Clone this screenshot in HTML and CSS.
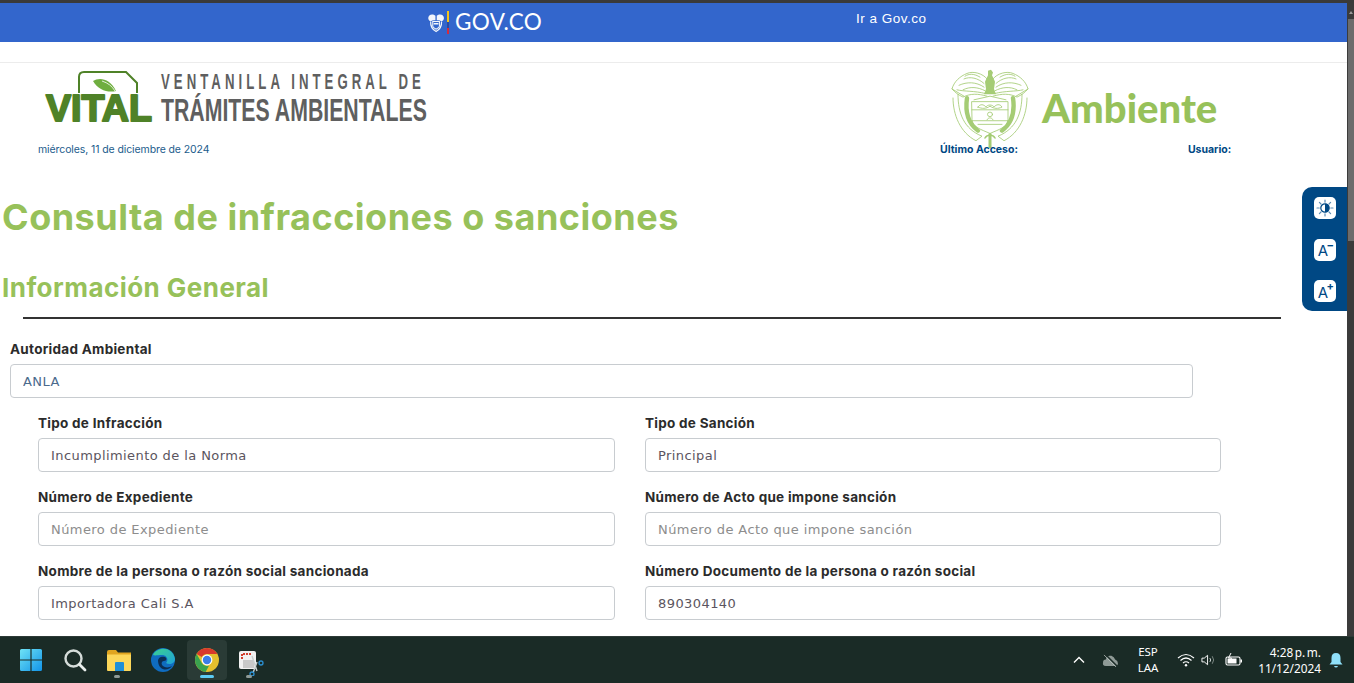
FILE: index.html
```html
<!DOCTYPE html>
<html lang="es">
<head>
<meta charset="utf-8">
<title>Consulta de infracciones o sanciones</title>
<link rel="stylesheet" href="styles.css">
</head>
<body>
<svg class="defs" width="0" height="0" aria-hidden="true">
  <symbol id="escudo" viewBox="11 5 78 88" preserveAspectRatio="none">
    <g fill="none" stroke="currentColor" stroke-width=".9" stroke-linecap="round" stroke-linejoin="round">
      <path d="M47 17C43 11 33 8 27 11C20 14 14 20 12 28C15 32 19 35 23 37C30 33 38 33 47 36"/>
      <path d="M53 17C57 11 67 8 73 11C80 14 86 20 88 28C85 32 81 35 77 37C70 33 62 33 53 36"/>
      <path d="M44 22C38 16 30 14 24 17M44 26C36 20 27 20 19 24M45 30C38 26 30 25 23 29M17 29C24 31 35 30 45 33M40 15C34 11 29 11 25 14"/>
      <path d="M56 22C62 16 70 14 76 17M56 26C64 20 73 20 81 24M55 30C62 26 70 25 77 29M83 29C76 31 65 30 55 33M60 15C66 11 71 11 75 14"/>
      <path d="M32 42H68V62C68 70 58 73 50 77C42 73 32 70 32 62Z"/>
      <path d="M32 51H68M32 63H68M34 40L50 36L66 40"/>
      <path d="M38 48C40 44 44 45 46 48C47 45 53 45 54 48C56 45 60 44 62 48C58 50 54 50 50 47C46 50 42 50 38 48Z"/>
      <circle cx="50" cy="56" r="2.5"/>
      <path d="M47 62C48 59 52 59 53 62M38 67H62"/>
      <path d="M18 34C18 55 24 72 42 80L36 85C20 76 13 56 13 38M82 34C82 55 76 72 58 80L64 85C80 76 87 56 87 38"/>
      <path d="M12 28L24 36M88 28L76 36"/>
    </g>
    <g fill="none" stroke="currentColor" stroke-linecap="round">
      <path d="M27 38C25 53 27 65 38 74" stroke-width="4.4"/>
      <path d="M73 38C75 53 73 65 62 74" stroke-width="4.4"/>
      <path d="M50 78V92" stroke-width="3"/>
      <path d="M45 82C47 78 53 78 55 82" stroke-width="1.6"/>
    </g>
    <path fill="currentColor" d="M48 8L51 7L53 10L52 13L55 20L54 28L56 34H44L46 28L45 20L48 13Z"/>
  </symbol>
  <symbol id="escudo-mini" viewBox="0 0 17 20">
    <path fill="currentColor" d="M7.800 2.500C6 .8 3 .6 1.400 2.200C.2 3.400 0 5 .6 6.200C1 7.200 2 7.900 3 8.100C4.500 7 6 6.800 7.800 7.200ZM9.200 2.500C11 .8 14 .6 15.600 2.200C16.800 3.400 17 5 16.400 6.200C16 7.200 15 7.900 14 8.100C12.500 7 11 6.800 9.200 7.200Z"/>
    <path fill="none" stroke="currentColor" stroke-width="1.100" d="M5 8.500H12V13.500C12 15 10 15.800 8.500 16.500C7 15.800 5 15 5 13.500Z"/>
    <path fill="none" stroke="currentColor" stroke-width="1.300" d="M2.800 8.500C2.500 12.500 4 16.500 8.500 19C13 16.500 14.500 12.500 14.200 8.500"/>
    <path fill="currentColor" d="M6 10H11V11.500H6Z"/>
  </symbol>
</svg>

<div class="window">
  <div class="page">
    <header class="gov-bar">
      <div class="gov-brand">
        <svg class="gov-shield"><use href="#escudo-mini"/></svg>
        <span class="gov-flag"></span>
        <span class="gov-name">GOV.CO</span>
      </div>
      <a class="gov-link">Ir a Gov.co</a>
    </header>

    <div class="gov-spacer"></div>

    <section class="brand-head">
      <div class="brand-left">
        <svg class="vital-logo" viewBox="0 0 392 62">
          <path class="vital-frame" d="M41 27V11Q41 6 46 6H88L99 17V27"/>
          <path class="vital-leaf" d="M55 15C61 11 72 12 78 25C70 27 60 24 55 15Z"/>
          <path class="vital-vein" d="M64 15C70 17 74 20 77 25"/>
          <text class="vital-word" x="8" y="55" textLength="106" lengthAdjust="spacingAndGlyphs">VITAL</text>
          <text class="logo-top" transform="translate(123 23) scale(.6 1)" textLength="438">VENTANILLA INTEGRAL DE</text>
          <text class="logo-bottom" transform="translate(123 55) scale(.65 1)" textLength="409" lengthAdjust="spacingAndGlyphs">TRÁMITES AMBIENTALES</text>
        </svg>
        <p class="today">miércoles, 11 de diciembre de 2024</p>
      </div>
      <div class="brand-right">
        <div class="ambiente">
          <svg class="ambiente-shield"><use href="#escudo"/></svg>
          <span class="ambiente-word">Ambiente</span>
        </div>
        <div class="access">
          <span>Último Acceso:</span>
          <span>Usuario:</span>
        </div>
      </div>
    </section>

    <main class="content">
      <h1>Consulta de infracciones o sanciones</h1>
      <h2>Información General</h2>
      <hr class="rule">

      <form class="form">
        <div class="field field-wide">
          <label for="autoridad">Autoridad Ambiental</label>
          <input id="autoridad" class="blue-value" value="ANLA" readonly>
        </div>
        <div class="form-grid">
          <div class="field">
            <label for="tipo">Tipo de Infracción</label>
            <input id="tipo" value="Incumplimiento de la Norma" readonly>
          </div>
          <div class="field">
            <label for="sancion">Tipo de Sanción</label>
            <input id="sancion" value="Principal" readonly>
          </div>
          <div class="field">
            <label for="exp">Número de Expediente</label>
            <input id="exp" placeholder="Número de Expediente">
          </div>
          <div class="field">
            <label for="acto">Número de Acto que impone sanción</label>
            <input id="acto" placeholder="Número de Acto que impone sanción">
          </div>
          <div class="field">
            <label for="nombre">Nombre de la persona o razón social sancionada</label>
            <input id="nombre" value="Importadora Cali S.A" readonly>
          </div>
          <div class="field">
            <label for="doc">Número Documento de la persona o razón social</label>
            <input id="doc" value="890304140" readonly>
          </div>
        </div>
      </form>
    </main>

    <aside class="a11y">
      <button class="a11y-btn" type="button" aria-label="Contraste">
        <svg viewBox="0 0 22 22" class="a11y-icon">
          <circle cx="11" cy="11" r="4.2" fill="none" stroke="#004884" stroke-width="1.2"/>
          <path d="M11 6.8a4.2 4.2 0 0 1 0 8.4Z" fill="#004884"/>
          <path d="M11 3V5.2M11 16.8V19M3 11H5.2M16.8 11H19M5.4 5.4L7 7M15 15L16.6 16.6M5.4 16.6L7 15M15 7L16.6 5.4" stroke="#5d8db5" stroke-width="1.2" stroke-linecap="round"/>
        </svg>
      </button>
      <button class="a11y-btn" type="button">A<sup class="a11y-sup">−</sup></button>
      <button class="a11y-btn" type="button">A<sup class="a11y-sup">+</sup></button>
    </aside>
  </div>

  <div class="scrollbar">
    <span class="scroll-arrow"></span>
    <span class="scroll-thumb"></span>
  </div>
</div>

<footer class="taskbar">
  <div class="task-icons">
    <span class="task-item">
      <svg viewBox="0 0 24 24" class="task-svg">
        <defs><linearGradient id="win" x1="0" y1="0" x2="1" y2="1"><stop offset="0" stop-color="#6fe3f5"/><stop offset="1" stop-color="#1294e8"/></linearGradient></defs>
        <path fill="url(#win)" d="M1 2.5Q1 1 2.5 1H11.4V11.4H1ZM12.6 1H21.5Q23 1 23 2.5V11.4H12.6ZM1 12.6H11.4V23H2.5Q1 23 1 21.5ZM12.6 12.6H23V21.5Q23 23 21.5 23H12.6Z"/>
      </svg>
    </span>
    <span class="task-item">
      <svg viewBox="0 0 24 24" class="task-svg">
        <circle cx="10.5" cy="10.5" r="8" fill="none" stroke="#d5dcd9" stroke-width="2.4"/>
        <path d="M16.5 16.5L22 22" stroke="#e9eeec" stroke-width="2.8" stroke-linecap="round"/>
      </svg>
    </span>
    <span class="task-item task-dot">
      <svg viewBox="0 0 24 24" class="task-svg">
        <path fill="#e0a520" d="M0 4Q0 2 2 2H9L11 4.5H24V12H0Z"/>
        <path fill="#fcd75a" d="M0 6.5H24V22Q24 23 23 23H1Q0 23 0 22Z"/>
        <path fill="#1f8fd8" d="M8 15Q8 14 9 14H16Q17 14 17 15V23H8Z"/>
      </svg>
    </span>
    <span class="task-item">
      <svg viewBox="0 0 24 24" class="task-svg">
        <defs>
          <linearGradient id="edgeA" x1="0" y1="0" x2="1" y2="1"><stop offset="0" stop-color="#3bd08f"/><stop offset="1" stop-color="#1fa2d8"/></linearGradient>
        </defs>
        <circle cx="12" cy="12" r="12" fill="#0f6cc0"/>
        <path fill="url(#edgeA)" d="M2 7C6 -2 22 -2 24 11C24 16 18 17 15 15C18 12 16 7 11 7C7 7 4 8 2 7Z"/>
        <path fill="#0b2d52" d="M7 13C7 9 11 8 14 9C16 10 16 13 13 13C11 13 10 15 11 17C13 20 18 20 21 18C18 23 8 24 7 13Z"/>
      </svg>
    </span>
    <span class="task-item task-active">
      <svg viewBox="0 0 24 24" class="task-svg">
        <circle cx="12" cy="12" r="12" fill="#e5c02e"/>
        <path fill="#d9392c" d="M12 0A12 12 0 0 1 22.4 6H12A6 6 0 0 0 6.8 9L1.6 6A12 12 0 0 1 12 0Z"/>
        <path fill="#3aa24f" d="M1.6 6L6.8 15A6 6 0 0 0 14.1 17.6L10.6 23.9A12 12 0 0 1 1.6 6Z"/>
        <circle cx="12" cy="12" r="5.4" fill="#fff"/>
        <circle cx="12" cy="12" r="4.2" fill="#3b7de8"/>
      </svg>
    </span>
    <span class="task-item task-dot task-dim">
      <svg viewBox="0 0 26 26" class="task-svg">
        <rect x="1" y="1" width="17" height="18" rx="2" fill="#f1f1f1"/>
        <path d="M4 9V4H13" fill="none" stroke="#d2402f" stroke-width="2" stroke-dasharray="2 1"/>
        <path d="M5 10H16V18H5Z" fill="#c9c9c9"/>
        <path d="M14 6L19 21M19 12L15 23" stroke="#c9d0d0" stroke-width="1.4"/>
        <circle cx="14" cy="24" r="2" fill="none" stroke="#2b8fd0" stroke-width="1.3"/>
        <circle cx="23" cy="13" r="2" fill="none" stroke="#2b8fd0" stroke-width="1.3"/>
      </svg>
    </span>
  </div>
  <div class="tray">
    <svg viewBox="0 0 12 8" class="tray-chev"><path d="M1 6.5L6 1.5L11 6.5" fill="none" stroke="#fff" stroke-width="1.4"/></svg>
    <svg viewBox="0 0 18 14" class="tray-cloud">
      <path d="M4 13Q0 13 1 9Q1 6 4 6Q5 1 10 2Q13 3 14 6Q17 7 17 10Q17 13 14 13Z" fill="#8f9a96"/>
      <path d="M3 0L16 13" stroke="#1a2b26" stroke-width="1.6"/>
      <path d="M2 1L15 14" stroke="#c5cdca" stroke-width=".8"/>
    </svg>
    <div class="tray-lang"><span>ESP</span><span>LAA</span></div>
    <svg viewBox="0 0 18 14" class="tray-wifi">
      <path d="M1 5Q9 -2 17 5M3.5 7.5Q9 2.5 14.500 7.500M6 10Q9 7.500 12 10" fill="none" stroke="#fff" stroke-width="1.2"/>
      <circle cx="9" cy="12.200" r="1.200" fill="#fff"/>
    </svg>
    <svg viewBox="0 0 16 14" class="tray-vol">
      <path d="M1 5H3.500L7 2V12L3.500 9H1Z" fill="none" stroke="#fff" stroke-width="1"/>
      <path d="M9.500 5Q11 7 9.500 9" fill="none" stroke="#dfe5e3" stroke-width="1"/>
      <path d="M12 3Q15 7 12 11" fill="none" stroke="#7f8c88" stroke-width="1"/>
    </svg>
    <svg viewBox="0 0 18 14" class="tray-batt">
      <rect x="1" y="4" width="14" height="8" rx="1.500" fill="none" stroke="#fff" stroke-width="1.100"/>
      <rect x="2.500" y="5.500" width="9" height="5" fill="#fff"/>
      <rect x="15.500" y="6.500" width="1.500" height="3" fill="#fff"/>
      <path d="M6 0L3.500 5H6.500L5 8" fill="none" stroke="#fff" stroke-width="1"/>
    </svg>
    <div class="tray-clock"><span>4:28 p. m.</span><span>11/12/2024</span></div>
    <svg viewBox="0 0 14 16" class="tray-bell">
      <path d="M7 1Q11.500 1 11.500 6V10L13.500 12.500H.5L2.500 10V6Q2.500 1 7 1Z" fill="#8fe0fa"/>
      <path d="M5 14H9Q8.500 15.500 7 15.500T5 14Z" fill="#8fe0fa"/>
    </svg>
  </div>
</footer>
</body>
</html>
```

FILE: styles.css
```css
* { box-sizing: border-box; }

html, body {
  margin: 0;
  height: 683px;
  overflow: hidden;
  background: #fff;
}

body {
  display: flex;
  flex-direction: column;
  font-family: "Inter", "Liberation Sans", sans-serif;
  color: #333;
}

.defs { display: block; height: 0; }

.window {
  height: 636px;
  display: flex;
  overflow: hidden;
  border-top: 3px solid #3a3a3a;
}

.page {
  position: relative;
  width: 1347px;
  flex: none;
  background: #fff;
}

.scrollbar {
  flex: 1;
  margin-top: -3px;
  background: #3b3b3b;
  display: flex;
  flex-direction: column;
  align-items: center;
}

.scroll-arrow {
  margin-top: 11px;
  width: 0;
  height: 0;
  border: 2px solid transparent;
  border-bottom: 3px solid #9a9a9a;
  border-top: 0;
}

.scroll-thumb {
  margin-top: 5px;
  width: 6px;
  margin-left: 1px;
  height: 222px;
  background: #6c6c6c;
}

/* barra gov.co */
.gov-bar {
  height: 39px;
  background: #3366cc;
  display: flex;
  color: #fff;
}

.gov-brand {
  margin-left: 428px;
  display: flex;
  align-items: center;
  height: 39px;
  width: 114px;
  flex: none;
}

.gov-shield {
  width: 17px;
  height: 20px;
  color: #f2f5fb;
}

.gov-flag {
  width: 2px;
  height: 23px;
  margin: 0 6px 0 3px;
  background: linear-gradient(#f5c518 0 50%, #2b4aa0 50% 74%, #d62b3c 74%);
}

.gov-name {
  font-family: "Lato", "Liberation Sans", sans-serif;
  font-size: 22.500px;
  letter-spacing: .3px;
  line-height: 1;
}

.gov-link {
  margin-left: 314px;
  margin-top: 8px;
  font-family: "Liberation Sans", sans-serif;
  font-size: 13.500px;
  line-height: 15px;
  letter-spacing: .5px;
}

.gov-spacer {
  height: 21px;
  border-bottom: 1px solid #ececec;
}

/* cabecera */
.brand-head {
  display: flex;
  height: 98px;
}

.brand-left {
  width: 940px;
  flex: none;
  padding-left: 38px;
}

.vital-logo {
  display: block;
  width: 392px;
  height: 62px;
  margin-top: 3px;
}

.vital-frame {
  fill: none;
  stroke: #4f8228;
  stroke-width: 2;
}

.vital-leaf { fill: #6fae3f; }

.vital-vein {
  fill: none;
  stroke: #fff;
  stroke-width: .8;
}

.vital-word {
  font-family: "Liberation Sans", sans-serif;
  font-weight: 700;
  font-size: 37px;
  fill: #4f8228;
  stroke: #4f8228;
  stroke-width: 2;
  stroke-linejoin: round;
}

.logo-top, .logo-bottom {
  font-family: "Liberation Sans", sans-serif;
  font-weight: 700;
  fill: #5f5f5f;
}

.logo-top { font-size: 22px; letter-spacing: 5px; }
.logo-bottom { font-size: 31px; }

.today {
  margin: 15px 0 0;
  font-size: 10.5px;
  line-height: 13px;
  letter-spacing: -.1px;
  color: #1c5c8c;
}

.brand-right {
  position: relative;
  flex: 1;
}

.ambiente {
  display: flex;
  align-items: flex-start;
}

.ambiente-shield {
  flex: none;
  width: 78px;
  height: 80px;
  margin: 5px 0 0 11px;
  color: #a5cc75;
}

.ambiente-word {
  margin-left: 13px;
  margin-top: 21px;
  font-family: "Lato", "Liberation Sans", sans-serif;
  font-weight: 900;
  font-size: 40px;
  line-height: 48px;
  color: #97c15a;
  white-space: nowrap;
}

.access {
  position: absolute;
  top: 80px;
  left: 0;
  display: flex;
  gap: 170px;
  font-size: 10.5px;
  line-height: 13px;
  font-weight: 700;
  color: #004884;
}

/* contenido */
.content { padding: 0 66px 0 2px; }

h1 {
  margin: 32px 0 0;
  font-size: 36px;
  line-height: 48px;
  font-weight: 700;
  color: #97c15a;
  letter-spacing: .5px;
  white-space: nowrap;
}

h2 {
  margin: 31px 0 0;
  font-size: 26px;
  line-height: 32px;
  font-weight: 700;
  color: #97c15a;
  letter-spacing: .45px;
}

.rule {
  margin: 13px 0 0 21px;
  width: 1258px;
  height: 2px;
  border: 0;
  background: #333;
}

.form { margin-top: 22px; }

.field label {
  display: block;
  font-family: "Inter", "Liberation Sans", sans-serif;
  font-size: 13.500px;
  line-height: 17px;
  font-weight: 700;
  color: #2b2b2b;
  letter-spacing: .28px;
  white-space: nowrap;
}

.field input {
  display: block;
  width: 100%;
  height: 34px;
  margin-top: 6px;
  padding: 0 12px;
  border: 1px solid #c8ccd0;
  border-radius: 4px;
  background: #fff;
  font-family: "DejaVu Sans", "Liberation Sans", sans-serif;
  font-size: 13px;
  letter-spacing: .42px;
  color: #5b5560;
  outline: none;
}

.field input::placeholder {
  color: #8d8d8d;
  opacity: 1;
}

.field input.blue-value { color: #4a6a8c; }

.field-wide {
  margin-left: 8px;
  width: 1183px;
}

.form-grid {
  margin: 17px 0 0 36px;
  width: 1183px;
  display: grid;
  grid-template-columns: 577px 576px;
  column-gap: 30px;
  row-gap: 17px;
}

/* accesibilidad */
.a11y {
  position: absolute;
  top: 184px;
  right: 0;
  width: 45px;
  height: 124px;
  padding: 10px 0 0 12px;
  background: #004884;
  border-radius: 10px 0 0 10px;
  display: flex;
  flex-direction: column;
  gap: 19.500px;
}

.a11y-btn {
  position: relative;
  width: 22px;
  height: 22px;
  padding: 3px 4px 0 0;
  border: 0;
  border-radius: 5px;
  background: #fff;
  font-family: "Inter", sans-serif;
  font-size: 15px;
  line-height: 18px;
  color: #004884;
}

.a11y-btn:first-child { padding: 0; }

.a11y-icon {
  display: block;
  width: 22px;
  height: 22px;
}

.a11y-sup {
  position: absolute;
  top: 1px;
  right: 2px;
  font-size: 11px;
  font-weight: 700;
  line-height: 10px;
}

/* barra de tareas */
.taskbar {
  height: 47px;
  background: #1a2b26;
  border-top: 1px solid #2d3a36;
  display: flex;
  justify-content: space-between;
  color: #fff;
  font-family: "Noto Sans", "Open Sans", sans-serif;
}

.task-icons {
  display: flex;
  margin-left: 9px;
}

.task-item {
  position: relative;
  width: 44px;
  height: 46px;
  display: flex;
  align-items: center;
  justify-content: center;
}

.task-svg {
  width: 24px;
  height: 24px;
}

.task-active::before {
  content: "";
  position: absolute;
  left: 2px;
  right: 2px;
  top: 3px;
  bottom: 3px;
  background: #2a3b36;
  border-radius: 4px;
}

.task-active .task-svg { position: relative; }

.task-active::after {
  content: "";
  position: absolute;
  left: 15px;
  bottom: 5px;
  width: 14px;
  height: 3px;
  border-radius: 2px;
  background: #5ccbf5;
}

.task-dot::after {
  content: "";
  position: absolute;
  left: 17px;
  bottom: 5px;
  width: 6px;
  height: 3px;
  border-radius: 2px;
  background: #8f9a96;
}

.task-dim .task-svg {
  width: 26px;
  height: 26px;
  margin-top: 6px;
}

.tray {
  display: flex;
  align-items: center;
  padding-right: 11px;
}

.tray-chev { width: 12px; height: 8px; margin-right: 17px; }
.tray-cloud { width: 17px; height: 13px; margin-right: 9px; }

.tray-lang {
  width: 40px;
  display: flex;
  flex-direction: column;
  align-items: center;
  margin-right: 9px;
  font-size: 11.500px;
  line-height: 16px;
}

.tray-wifi { width: 18px; height: 14px; margin-right: 6px; }
.tray-vol { width: 15px; height: 14px; margin-right: 9px; }
.tray-batt { width: 18px; height: 14px; margin-right: 7px; }

.tray-clock {
  display: flex;
  flex-direction: column;
  align-items: flex-end;
  width: 71px;
  font-size: 11.800px;
  line-height: 16px;
  white-space: nowrap;
  word-spacing: -1.500px;
}

.tray-bell {
  width: 14px;
  height: 16px;
  margin-left: 8px;
}
```
